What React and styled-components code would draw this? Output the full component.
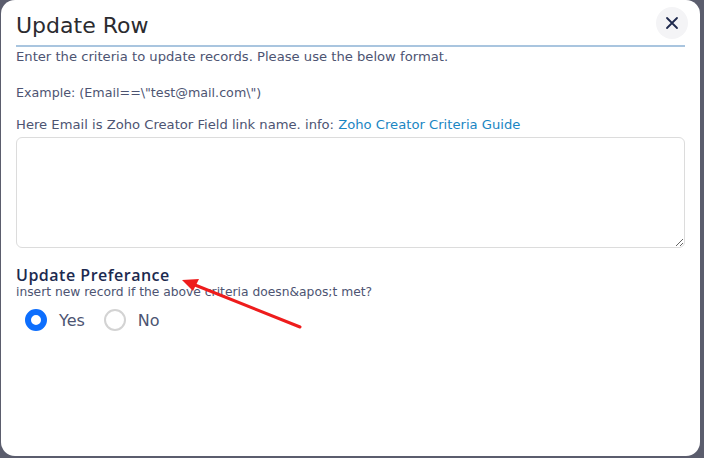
import React, { useState } from 'react'
import styled, { createGlobalStyle } from 'styled-components'

const GlobalStyle = createGlobalStyle`
  html, body {
    margin: 0;
    padding: 0;
    background: #5b5d6d;
    font-family: "DejaVu Sans", "Open Sans", sans-serif;
  }
`

const Backdrop = styled.div`
  width: 704px;
  height: 458px;
  padding: 0 4px 2px 1px;
  box-sizing: border-box;
  overflow: hidden;
`

const Modal = styled.div`
  height: 456px;
  background: #fff;
  border-radius: 14px;
  padding: 0 15px 0 15px;
  box-sizing: border-box;
  display: flex;
  flex-direction: column;
`

const Header = styled.div`
  display: flex;
  align-items: center;
  justify-content: space-between;
  height: 45px;
  border-bottom: 2px solid #a9c5df;
`

const Title = styled.h2`
  margin: 0;
  font-size: 22px;
  font-weight: 400;
  color: #2b2b2f;
  padding-top: 5px;
`

const CloseButton = styled.button`
  width: 32px;
  height: 32px;
  border-radius: 50%;
  border: none;
  background: #f4f4f6;
  display: flex;
  align-items: center;
  justify-content: center;
  margin-right: -3px;
  margin-top: 1px;
  padding: 0;
  cursor: pointer;
`

const Text = styled.p`
  margin: ${p => p.mt || 0}px 0 0;
  font-size: ${p => p.size || 13.15}px;
  line-height: 18px;
  color: #4d5472;
`

const Link = styled.a`
  color: #1a86c3;
  text-decoration: none;
`

const Criteria = styled.textarea`
  margin-top: 3px;
  height: 111px;
  border: 1px solid #dcdcdc;
  border-radius: 6px;
  resize: vertical;
  box-sizing: border-box;
  font-family: inherit;
`

const SectionTitle = styled.h3`
  margin: 17px 0 0;
  font-family: "Open Sans", sans-serif;
  font-size: 16px;
  font-weight: 600;
  letter-spacing: 0.5px;
  color: #1c2a4f;
  line-height: 20px;
`

const Hint = styled.p`
  margin: -1px 0 0;
  font-size: 12.3px;
  line-height: 16px;
  color: #4d5472;
`

const RadioRow = styled.div`
  display: flex;
  align-items: center;
  gap: 19px;
  margin-top: 9px;
  padding-left: 9px;
`

const RadioLabel = styled.label`
  display: flex;
  align-items: center;
  gap: 12px;
  font-size: 16px;
  color: #4d5472;
  cursor: pointer;
`

const RadioDot = styled.span`
  width: 22px;
  height: 22px;
  border-radius: 50%;
  box-sizing: border-box;
  border: ${p => (p.checked ? '6px solid #0d6efd' : '2px solid #d3d3d3')};
  background: #fff;
`

const Arrow = styled.svg`
  position: absolute;
  left: 0;
  top: 0;
  pointer-events: none;
`

export default function App() {
  const [pref, setPref] = useState('yes')

  return (
    <>
      <GlobalStyle />
      <Backdrop>
        <Modal>
          <Header>
            <Title>Update Row</Title>
            <CloseButton aria-label="close">
              <svg width="14" height="14" viewBox="0 0 14 14">
                <path d="M2 2 L12 12 M12 2 L2 12" stroke="#1f2a4d" strokeWidth="1.8" strokeLinecap="round" />
              </svg>
            </CloseButton>
          </Header>
          <Text mt={1}>Enter the criteria to update records. Please use the below format.</Text>
          <Text mt={18} size={12.7}>Example: (Email==\"test@mail.com\")</Text>
          <Text mt={14}>
            Here Email is Zoho Creator Field link name. info: <Link href="#">Zoho Creator Criteria Guide</Link>
          </Text>
          <Criteria />
          <SectionTitle>Update Preferance</SectionTitle>
          <Hint>insert new record if the above criteria doesn&amp;apos;t met?</Hint>
          <RadioRow>
            <RadioLabel onClick={() => setPref('yes')}>
              <RadioDot checked={pref === 'yes'} />
              Yes
            </RadioLabel>
            <RadioLabel onClick={() => setPref('no')}>
              <RadioDot checked={pref === 'no'} />
              No
            </RadioLabel>
          </RadioRow>
        </Modal>
      </Backdrop>
      <Arrow width="704" height="458">
        <path d="M300 327 L190 283" stroke="#ee1c1c" strokeWidth="3" strokeLinecap="round" />
        <path d="M182 280 L199 279 L193 291 Z" fill="#ee1c1c" />
      </Arrow>
    </>
  )
}
